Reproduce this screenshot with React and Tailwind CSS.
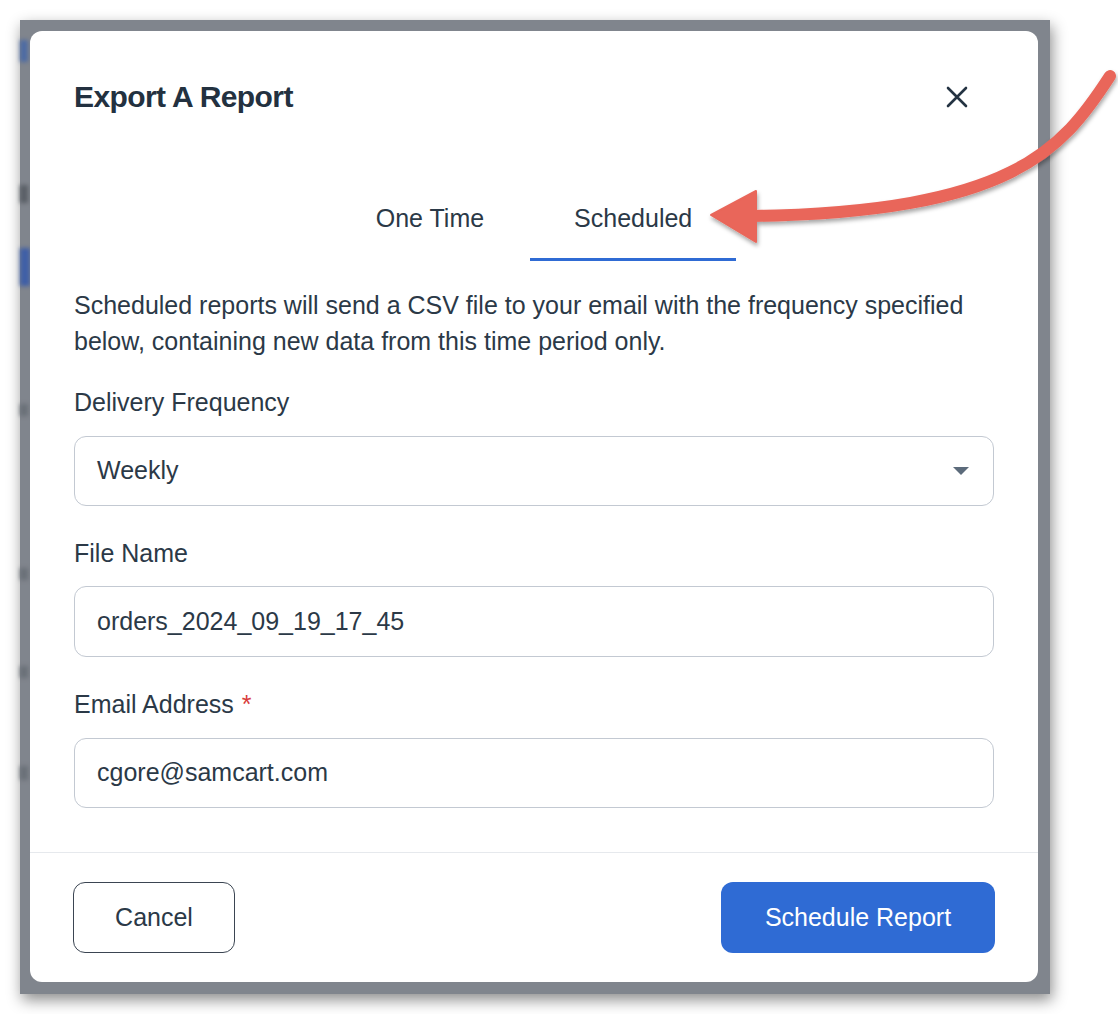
import React from "react";

function CloseIcon() {
  return (
    <svg width="24" height="24" viewBox="0 0 24 24" fill="none" stroke="#243342" strokeWidth="2.6" strokeLinecap="round">
      <path d="M3 3 L21 21 M21 3 L3 21" />
    </svg>
  );
}

function Arrow() {
  return (
    <svg className="absolute left-0 top-0 pointer-events-none" width="1118" height="300" viewBox="0 0 1118 300">
      <defs>
        <filter id="arrowShadow" x="-10%" y="-10%" width="120%" height="130%">
          <feDropShadow dx="1" dy="3" stdDeviation="2" floodColor="#000" floodOpacity="0.35" />
        </filter>
      </defs>
      <g filter="url(#arrowShadow)" fill="#e9665a" stroke="#e9665a">
        <path d="M1110 76 C1062 150 1012 212 752 216" fill="none" strokeWidth="12" strokeLinecap="round" />
        <path d="M711 215 L756 191 L756 242 Z" strokeWidth="2" strokeLinejoin="round" />
      </g>
    </svg>
  );
}

function Field({ label, required, children }) {
  return (
    <div>
      <div className="text-[25px] leading-[36px] text-[#2b3947]">
        {label}
        {required && <span className="text-[#d93b3b] ml-[8px]">*</span>}
      </div>
      {children}
    </div>
  );
}

export default function App() {
  return (
    <div className="relative w-[1118px] h-[1014px] bg-white overflow-hidden" style={{ fontFamily: "'Liberation Sans', Arial, sans-serif" }}>
      {/* screenshot frame */}
      <div className="relative ml-[20px] mt-[20px] w-[1030px] h-[974px] bg-[#80858d] pl-[10px] pt-[11px] shadow-[2px_6px_14px_rgba(0,0,0,0.45)]">
        {/* blurred page bits behind the overlay */}
        <div className="absolute left-0 top-[20px] w-[8px] h-[22px] bg-[#4d6ba3] blur-[2px]"></div>
        <div className="absolute left-0 top-[165px] w-[8px] h-[18px] bg-[#5a5f66] blur-[2px]"></div>
        <div className="absolute left-0 top-[228px] w-[10px] h-[38px] bg-[#3f5fa6] blur-[2px]"></div>
        <div className="absolute left-0 top-[384px] w-[8px] h-[12px] bg-[#6a7078] blur-[2px]"></div>
        <div className="absolute left-0 top-[548px] w-[8px] h-[12px] bg-[#6a7078] blur-[2px]"></div>
        <div className="absolute left-0 top-[646px] w-[8px] h-[12px] bg-[#6a7078] blur-[2px]"></div>
        <div className="absolute left-0 top-[746px] w-[8px] h-[14px] bg-[#6a7078] blur-[2px]"></div>

        {/* modal */}
        <div className="relative w-[1008px] h-[951px] bg-white rounded-[12px] flex flex-col">
          <div className="flex items-center justify-between px-[44px] pt-[48px]">
            <h2 className="text-[30px] leading-[36px] font-bold tracking-[-0.6px] text-[#233140]">Export A Report</h2>
            <button className="w-[24px] h-[24px] mr-[25px] flex items-center justify-center">
              <CloseIcon />
            </button>
          </div>

          <div className="flex justify-center gap-[2px] mt-[88px]">
            <div className="px-[44px] pb-[25px] border-b-[3px] border-transparent text-[25px] leading-[30px] text-[#2b3947]">One Time</div>
            <div className="px-[44px] pb-[25px] border-b-[3px] border-[#2f6bd4] text-[25px] leading-[30px] text-[#2b3947]">Scheduled</div>
          </div>

          <div className="px-[44px] flex flex-col">
            <p className="mt-[26px] text-[25px] leading-[36px] text-[#2b3947]">
              Scheduled reports will send a CSV file to your email with the frequency specified below, containing new data from this time period only.
            </p>

            <div className="mt-[25px]">
              <Field label="Delivery Frequency">
                <div className="mt-[16px] h-[70px] rounded-[12px] border border-[#c3c9d2] flex items-center justify-between pl-[22px] pr-[24px]">
                  <span className="text-[25px] text-[#2b3947]">Weekly</span>
                  <svg width="16" height="9" viewBox="0 0 16 9">
                    <path d="M0 0 L16 0 L8 8 Z" fill="#5c6b7b" />
                  </svg>
                </div>
              </Field>
            </div>

            <div className="mt-[29px]">
              <Field label="File Name">
                <div className="mt-[15px] h-[71px] rounded-[12px] border border-[#c3c9d2] flex items-center pl-[22px]">
                  <span className="text-[25px] text-[#2b3947]">orders_2024_09_19_17_45</span>
                </div>
              </Field>
            </div>

            <div className="mt-[29px]">
              <Field label="Email Address" required>
                <div className="mt-[16px] h-[70px] rounded-[12px] border border-[#c3c9d2] flex items-center pl-[22px]">
                  <span className="text-[25px] text-[#2b3947]">cgore@samcart.com</span>
                </div>
              </Field>
            </div>
          </div>

          <div className="mt-[44px] border-t border-[#e6e9ed] px-[43px] pl-[43px] pt-[29px] flex justify-between">
            <button className="w-[162px] h-[71px] rounded-[12px] border border-[#3b4552] text-[25px] text-[#2b3947]">Cancel</button>
            <button className="w-[274px] h-[71px] rounded-[12px] bg-[#2f6bd4] text-[25px] text-white">Schedule Report</button>
          </div>
        </div>
      </div>

      <Arrow />
    </div>
  );
}
